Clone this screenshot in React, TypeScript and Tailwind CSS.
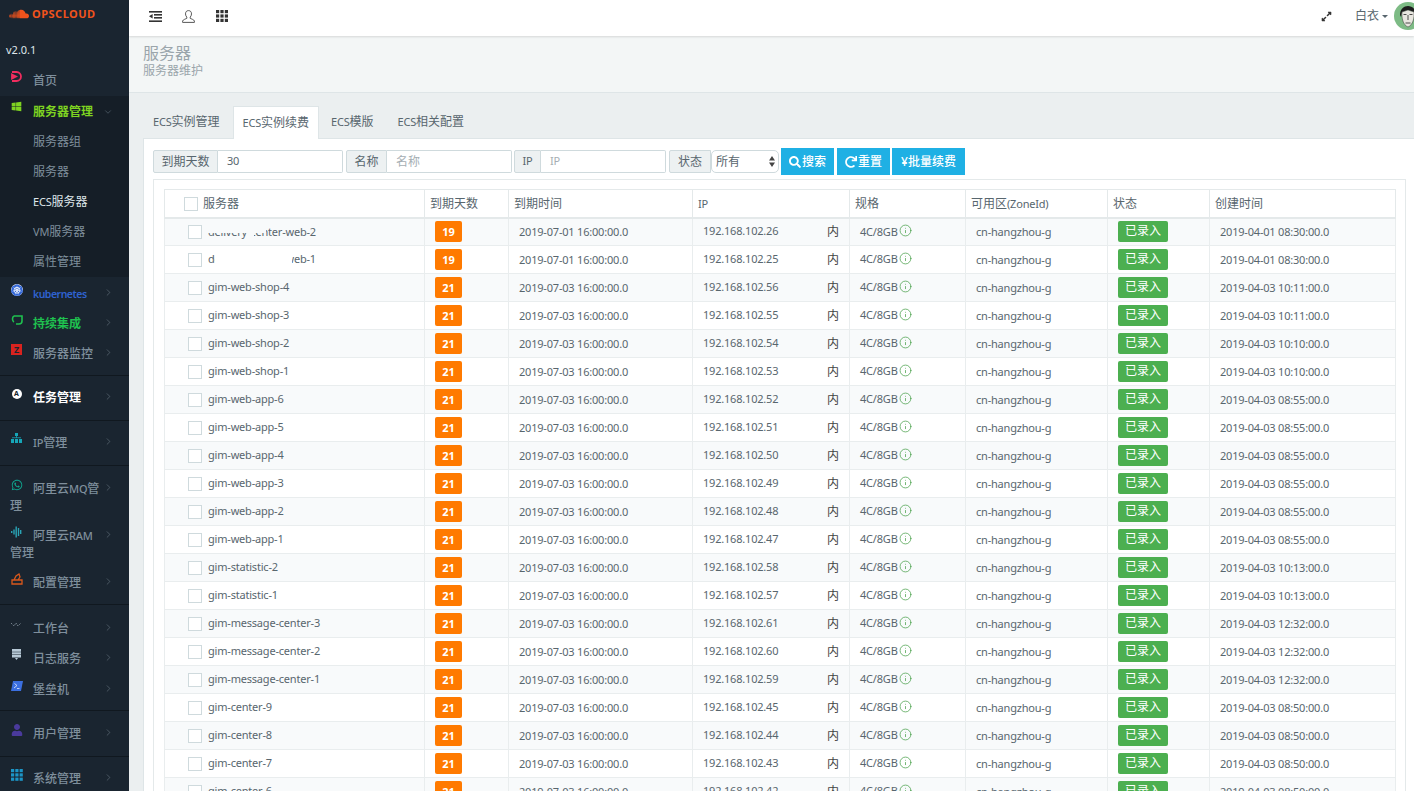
import type { ReactNode } from 'react';
import { ChevronDown, ChevronRight, Info } from 'lucide-react';
import { FaExpandAlt, FaRedo, FaSearch, FaSoundcloud, FaUser, FaWhatsapp, FaWindows } from 'react-icons/fa';
import { SiKubernetes } from 'react-icons/si';

const font = "font-['Noto_Sans','Noto_Sans_CJK_SC',sans-serif]";

// latin runs are set a bit smaller and tighter than the CJK around them
function Mix({ text }: { text: string }) {
  const parts = text.split(/([\x20-\x7e]+)/).filter(Boolean);
  return (
    <>
      {parts.map((p, i) =>
        /^[\x20-\x7e]+$/.test(p) ? (
          <span key={i} className="text-[11px] tracking-[-0.2px]">{p}</span>
        ) : (
          <span key={i}>{p}</span>
        ),
      )}
    </>
  );
}

function OutdentIcon() {
  return (
    <svg width="13" height="11" viewBox="0 0 13 11" fill="#333">
      <rect x="0" y="0" width="13" height="1.6" />
      <rect x="5" y="3" width="8" height="1.6" />
      <rect x="5" y="6" width="8" height="1.6" />
      <rect x="0" y="9.4" width="13" height="1.6" />
      <path d="M0 5.3 3.6 3v4.6z" />
    </svg>
  );
}

function UserLineIcon() {
  return (
    <svg width="13" height="13" viewBox="0 0 13 13" fill="none" stroke="#444" strokeWidth="0.9">
      <path d="M6.5.6c-2 0-3 1.4-3 3.3 0 1.4.6 2.5 1.3 3.2v1.2C4 8.9 1 9.5.6 11c-.1.5 0 1.4 0 1.4h11.800s.1-.9 0-1.400C12 9.500 9 8.900 8.200 8.300V7.100c.7-.7 1.300-1.800 1.300-3.200 0-1.900-1-3.300-3-3.300z" />
    </svg>
  );
}

function GridIcon() {
  return (
    <svg width="12" height="12" viewBox="0 0 12 12" fill="#333">
      {[0, 4.4, 8.8].flatMap((y) =>
        [0, 4.4, 8.8].map((x) => <rect key={`${x}-${y}`} x={x} y={y} width="3.2" height="3.2" />),
      )}
    </svg>
  );
}

function Avatar() {
  return (
    <svg width="28" height="28" viewBox="0 0 28 28" className="shrink-0">
      <circle cx="14" cy="14" r="14" fill="#7dbb85" />
      <path d="M6 13c0-6 4-9 8-9s8 3 8 9l-1 2-1-5-6-2-6 2-1 5z" fill="#1c1c1c" />
      <path d="M8 10l6-2 6 2c.5 6-1 13-6 15-5-2-6.5-9-6-15z" fill="#e8e6df" stroke="#333" strokeWidth="0.5" />
      <path d="M9.5 12.5h3M15.5 12.5h3M14 13v5M11.5 21h5" stroke="#222" strokeWidth="0.8" fill="none" />
    </svg>
  );
}

function NavIcon({ children }: { children: ReactNode }) {
  return <span className="relative -top-[5px] mr-[10px] inline-flex h-[13px] w-[13px] items-center justify-center align-middle">{children}</span>;
}

type NavEntry = {
  label: string;
  icon: ReactNode;
  text?: string;
  pt: string;
  pb: string;
  divider?: boolean;
};

const navTop: NavEntry[] = [
  {
    label: 'kubernetes',
    icon: <span className="rounded-full bg-white"><SiKubernetes size={12} color="#3367d6" /></span>,
    text: 'text-[#2f62cf] text-[10.5px] tracking-[-0.5px] font-semibold',
    pt: 'pt-[8px]',
    pb: 'pb-[6px]',
  },
  {
    label: '持续集成',
    icon: (
      <svg width="12" height="12" viewBox="0 0 12 12" fill="none" stroke="#1fc14f" strokeWidth="1.6">
        <path d="M3 2h8v5c0 2-1 3-3 3H5M3 2C1 3 1 7 3 8" />
      </svg>
    ),
    text: 'text-[#1fc14f] font-semibold',
    pt: 'pt-[6px]',
    pb: 'pb-[6px]',
  },
  {
    label: '服务器监控',
    icon: <span className="flex h-[11px] w-[11px] items-center justify-center bg-[#d9231f] text-[9px] leading-none font-bold text-[#1a2530]">Z</span>,
    pt: 'pt-[7px]',
    pb: 'pb-[13px]',
    divider: true,
  },
  {
    label: '任务管理',
    icon: <span className="flex h-[10px] w-[10px] items-center justify-center rounded-full bg-white text-[7px] leading-none font-bold text-[#1a2530]">A</span>,
    text: 'text-white font-semibold',
    pt: 'pt-[13px]',
    pb: 'pb-[14px]',
    divider: true,
  },
  {
    label: 'IP管理',
    icon: (
      <svg width="11" height="11" viewBox="0 0 11 11" fill="#16a6b8">
        <rect x="4" y="0" width="3" height="3" />
        <rect x="5.1" y="3" width="0.8" height="2" />
        <rect x="1" y="4.4" width="9" height="0.8" />
        <rect x="0" y="6" width="3" height="4" />
        <rect x="4" y="6" width="3" height="4" />
        <rect x="8" y="6" width="3" height="4" />
      </svg>
    ),
    pt: 'pt-[13px]',
    pb: 'pb-[14px]',
    divider: true,
  },
  {
    label: '阿里云MQ管理',
    icon: <FaWhatsapp size={12} color="#10a58e" />,
    pt: 'pt-[14px]',
    pb: 'pb-[7px]',
  },
  {
    label: '阿里云RAM管理',
    icon: (
      <svg width="12" height="12" viewBox="0 0 12 12" fill="#2aa3b5">
        <rect x="0" y="5" width="1.4" height="2" />
        <rect x="2.3" y="3.5" width="1.4" height="5" />
        <rect x="4.5" y="0.5" width="1.4" height="11" />
        <rect x="6.8" y="2" width="1.4" height="8" />
        <rect x="9" y="4" width="1.4" height="4" />
      </svg>
    ),
    pt: 'pt-[6px]',
    pb: 'pb-[6px]',
  },
  {
    label: '配置管理',
    icon: (
      <svg width="12" height="12" viewBox="0 0 12 12" fill="none" stroke="#d9581c" strokeWidth="1.3">
        <path d="M1 7h10v4H1zM3 7l2-4 3-2 1 3-2 3" />
      </svg>
    ),
    pt: 'pt-[7px]',
    pb: 'pb-[13px]',
    divider: true,
  },
  {
    label: '工作台',
    icon: (
      <svg width="11" height="6" viewBox="0 0 11 6" fill="none" stroke="#8a98a3" strokeWidth="0.8" strokeDasharray="1.5 1">
        <path d="M0 1l3 3 2-3 2 3 3-3" />
      </svg>
    ),
    pt: 'pt-[15px]',
    pb: 'pb-[6px]',
  },
  {
    label: '日志服务',
    icon: (
      <svg width="9" height="11" viewBox="0 0 9 11" fill="#b7c9d6">
        <rect x="0" y="0" width="9" height="8.5" />
        <path d="M3 9h3l-1.5 2z" />
        <path d="M0 3h9M0 5.5h9" stroke="#1a2530" strokeWidth="0.5" />
      </svg>
    ),
    pt: 'pt-[7px]',
    pb: 'pb-[7px]',
  },
  {
    label: '堡垒机',
    icon: (
      <svg width="12" height="10" viewBox="0 0 12 10">
        <path d="M2 0h10l-2 10H0z" fill="#3b6fe0" />
        <path d="M3.5 2.5 6 4.5 3 7M6 7.5h2.5" stroke="#fff" strokeWidth="0.7" fill="none" />
      </svg>
    ),
    pt: 'pt-[7px]',
    pb: 'pb-[12px]',
    divider: true,
  },
  {
    label: '用户管理',
    icon: <FaUser size={12} color="#4a3a9c" />,
    pt: 'pt-[14px]',
    pb: 'pb-[14px]',
    divider: true,
  },
  {
    label: '系统管理',
    icon: (
      <svg width="12" height="12" viewBox="0 0 12 12" fill="#1c95c6">
        {[0, 4.3, 8.6].flatMap((y) =>
          [0, 4.3, 8.6].map((x) => <rect key={`${x}-${y}`} x={x} y={y} width="3.2" height="3.2" />),
        )}
      </svg>
    ),
    pt: 'pt-[13px]',
    pb: 'pb-[10px]',
  },
];

const subNav = [
  { label: '服务器组', active: false },
  { label: '服务器', active: false },
  { label: 'ECS服务器', active: true },
  { label: 'VM服务器', active: false },
  { label: '属性管理', active: false },
];

function Sidebar() {
  return (
    <aside className="flex h-full w-[129px] shrink-0 flex-col overflow-hidden bg-[#1a2530] text-[12px] leading-[17px] text-[#7f8f9c]">
      <div className="flex items-center gap-[3px] pt-[2px] pl-[9px] text-[#f0531c]">
        <FaSoundcloud size={20} />
        <span className="text-[11px] leading-[24px] font-bold tracking-[0.5px]">OPSCLOUD</span>
      </div>
      <div className="pt-[14px] pl-[6px] text-[11px] leading-[20px] text-[#dfe6ea]">v2.0.1</div>
      <div className="pt-[12px] pb-[7px] pl-[10px] font-medium">
        <NavIcon>
          <svg width="11" height="11" viewBox="0 0 11 11" fill="none" stroke="#ef2d5e" strokeWidth="1.8">
            <path d="M1 1h4.500a4.500 4.500 0 0 1 0 9H1" />
            <path d="M1 3.500 5 5.500 1 7.500z" fill="#ef2d5e" />
          </svg>
        </NavIcon>
        首页
      </div>
      <div className="bg-[#151e27] pb-[1px]">
        <div className="flex items-center pt-[7px] pb-[6px] pl-[10px]">
          <NavIcon><FaWindows size={11} color="#7ed321" /></NavIcon>
          <span className="font-semibold text-[#7ed321]">服务器管理</span>
          <ChevronDown size={10} strokeWidth={1.2} className="ml-auto mr-[16px] text-[#6f7e8a]" />
        </div>
        {subNav.map((item) => (
          <div key={item.label} className={`py-[6.5px] pl-[33px] ${item.active ? 'text-[#dfe6ea]' : ''}`}>
            <Mix text={item.label} />
          </div>
        ))}
      </div>
      {navTop.map((item) => (
        <div key={item.label} className={`pl-[10px] ${item.pt} ${item.pb} ${item.divider ? 'border-b border-[#10181f]' : ''}`}>
          <ChevronRight size={11} strokeWidth={1.2} className="float-right mt-[2px] mr-[15px] text-[#6f7e8a]" />
          <NavIcon>{item.icon}</NavIcon>
          <span className={item.text ?? 'font-medium'}>
            {item.label === 'kubernetes' ? item.label : <Mix text={item.label} />}
          </span>
        </div>
      ))}
    </aside>
  );
}

function Addon({ children, className }: { children: string; className: string }) {
  return (
    <span className={`flex h-[23px] shrink-0 items-center justify-center rounded-l-[2px] border border-[#cfdadd] bg-[#edf1f2] text-[12px] text-[#58666e] ${className}`}>
      <Mix text={children} />
    </span>
  );
}

function TextField({ value, placeholder, className }: { value?: string; placeholder?: string; className: string }) {
  return (
    <span className={`flex h-[23px] items-center rounded-r-[2px] border border-l-0 border-[#cfdadd] bg-white pl-[9px] text-[12px] ${value ? 'text-[#58666e]' : 'text-[#a5aeb3]'} ${className}`}>
      <Mix text={value ?? placeholder ?? ''} />
    </span>
  );
}

function ActionButton({ children, className }: { children: ReactNode; className: string }) {
  return (
    <button className={`flex h-[27px] items-center justify-center gap-[1px] bg-[#1fb0e4] text-[12px] font-medium text-white ${className}`}>
      {children}
    </button>
  );
}

type Row = { name: string; days: number; expire: string; ip: string; created: string };

const r = (name: string, ip: string, created: string): Row => ({ name, days: 21, expire: '2019-07-03 16:00:00.0', ip, created });

const rows: Row[] = [
  { name: 'delivery-center-web-2', days: 19, expire: '2019-07-01 16:00:00.0', ip: '192.168.102.26', created: '2019-04-01 08:30:00.0' },
  { name: 'delivery-center-web-1', days: 19, expire: '2019-07-01 16:00:00.0', ip: '192.168.102.25', created: '2019-04-01 08:30:00.0' },
  r('gim-web-shop-4', '192.168.102.56', '2019-04-03 10:11:00.0'),
  r('gim-web-shop-3', '192.168.102.55', '2019-04-03 10:11:00.0'),
  r('gim-web-shop-2', '192.168.102.54', '2019-04-03 10:10:00.0'),
  r('gim-web-shop-1', '192.168.102.53', '2019-04-03 10:10:00.0'),
  r('gim-web-app-6', '192.168.102.52', '2019-04-03 08:55:00.0'),
  r('gim-web-app-5', '192.168.102.51', '2019-04-03 08:55:00.0'),
  r('gim-web-app-4', '192.168.102.50', '2019-04-03 08:55:00.0'),
  r('gim-web-app-3', '192.168.102.49', '2019-04-03 08:55:00.0'),
  r('gim-web-app-2', '192.168.102.48', '2019-04-03 08:55:00.0'),
  r('gim-web-app-1', '192.168.102.47', '2019-04-03 08:55:00.0'),
  r('gim-statistic-2', '192.168.102.58', '2019-04-03 10:13:00.0'),
  r('gim-statistic-1', '192.168.102.57', '2019-04-03 10:13:00.0'),
  r('gim-message-center-3', '192.168.102.61', '2019-04-03 12:32:00.0'),
  r('gim-message-center-2', '192.168.102.60', '2019-04-03 12:32:00.0'),
  r('gim-message-center-1', '192.168.102.59', '2019-04-03 12:32:00.0'),
  r('gim-center-9', '192.168.102.45', '2019-04-03 08:50:00.0'),
  r('gim-center-8', '192.168.102.44', '2019-04-03 08:50:00.0'),
  r('gim-center-7', '192.168.102.43', '2019-04-03 08:50:00.0'),
  r('gim-center-6', '192.168.102.42', '2019-04-03 08:50:00.0'),
];

const headers = ['到期天数', '到期时间', 'IP', '规格', '可用区(ZoneId)', '状态', '创建时间'];

function Checkbox() {
  return <span className="inline-block h-[14px] w-[14px] shrink-0 border border-[#cfdadd] bg-white" />;
}

function ServerTable() {
  return (
    <table className="w-[1231px] table-fixed border-collapse text-[12px] text-[#58666e]">
      <colgroup>
        <col className="w-[260px]" />
        <col className="w-[84px]" />
        <col className="w-[184px]" />
        <col className="w-[157px]" />
        <col className="w-[116px]" />
        <col className="w-[142px]" />
        <col className="w-[102px]" />
        <col className="w-[186px]" />
      </colgroup>
      <thead>
        <tr className="h-[28px] border border-b-2 border-[#e4e9ea] text-left">
          <th className="border-r border-[#e4e9ea] pt-[2px] pl-[19px] font-normal">
            <span className="flex items-center gap-[5px]"><Checkbox />服务器</span>
          </th>
          {headers.map((h) => (
            <th key={h} className="border-r border-[#e4e9ea] pt-[2px] pl-[5px] font-normal"><Mix text={h} /></th>
          ))}
        </tr>
      </thead>
      <tbody>
        {rows.map((row, i) => (
          <tr key={row.name} className={`h-[28px] border border-[#e9edee] ${i % 2 === 0 ? 'bg-[#f8fafb]' : 'bg-white'}`}>
            <td className="relative border-r border-[#e9edee] pl-[23px]">
              <span className="flex items-center gap-[6px]">
                <Checkbox />
                <Mix text={row.name} />
              </span>
              {i === 0 && (
                <>
                  <span className="absolute top-[6px] left-[43px] h-[8px] w-[58px] bg-[#f8fafb]" />
                  <span className="absolute top-[6px] left-[82px] h-[16px] w-[7px] bg-[#f8fafb]" />
                </>
              )}
              {i === 1 && <span className="absolute top-[6px] left-[50px] h-[17px] w-[77px] bg-white" />}
            </td>
            <td className="border-r border-[#e9edee] pl-[10px]">
              <span className="block h-[21px] w-[27px] rounded-[2px] bg-[#ff7a00] text-center text-[11px] leading-[21px] font-bold text-white">{row.days}</span>
            </td>
            <td className="border-r border-[#e9edee] pl-[10px]"><Mix text={row.expire} /></td>
            <td className="border-r border-[#e9edee] pr-[10px] pl-[10px]">
              <span className="flex justify-between"><Mix text={row.ip} /><span className="text-[#444]">内</span></span>
            </td>
            <td className="border-r border-[#e9edee] pl-[10px]">
              <span className="flex items-center gap-[1px]"><Mix text="4C/8GB" /><Info size={13} strokeWidth={1.3} className="relative -top-[1px] text-[#3d9a3f]" /></span>
            </td>
            <td className="border-r border-[#e9edee] pl-[10px]"><Mix text="cn-hangzhou-g" /></td>
            <td className="border-r border-[#e9edee] pl-[10px]">
              <span className="block h-[21px] w-[50px] rounded-[2px] bg-[#4caf50] text-center text-[12px] leading-[20px] text-white">已录入</span>
            </td>
            <td className="border-r border-[#e9edee] pl-[10px]"><Mix text={row.created} /></td>
          </tr>
        ))}
      </tbody>
    </table>
  );
}

export default function App() {
  return (
    <div className={`flex h-[791px] w-[1414px] overflow-hidden bg-[#ebeff0] ${font}`}>
      <Sidebar />
      <main className="flex min-w-0 flex-1 flex-col">
        <header className="relative flex h-[36px] shrink-0 items-center bg-white pr-0 pb-[4px] pl-[20px] shadow-[0_1px_2px_rgba(0,0,0,0.12)]">
          <OutdentIcon />
          <span className="ml-[20px] flex"><UserLineIcon /></span>
          <span className="ml-[21px] flex"><GridIcon /></span>
          <span className="ml-auto flex items-center text-[12px] text-[#58666e]">
            <FaExpandAlt size={11} color="#333" />
            <span className="ml-[23px]">白衣</span>
            <span className="ml-[3px] h-0 w-0 border-x-[3px] border-t-[3px] border-x-transparent border-t-[#58666e]" />
            <span className="-mr-[8px] ml-[6px] flex"><Avatar /></span>
          </span>
        </header>
        <section className="h-[57px] shrink-0 border-b border-[#dee5e7] bg-[#f3f6f6] pt-[6px] pl-[14px] text-[#9aa5ab]">
          <h1 className="text-[16px] leading-[22px] font-normal">服务器</h1>
          <p className="text-[12px] leading-[13px]">服务器维护</p>
        </section>
        <div className="flex min-h-0 flex-1 flex-col pt-[13px] pl-[14px]">
          <nav className="flex h-[32px] shrink-0 text-[12px] text-[#58666e]">
            <span className="mr-[3px] flex items-center px-[10px]"><Mix text="ECS实例管理" /></span>
            <span className="relative z-10 mr-[2px] flex h-[33px] items-center border border-b-0 border-[#dee5e7] bg-white px-[9px]"><Mix text="ECS实例续费" /></span>
            <span className="mr-[4px] flex items-center px-[10px]"><Mix text="ECS模版" /></span>
            <span className="flex items-center px-[10px]"><Mix text="ECS相关配置" /></span>
          </nav>
          <div className="min-h-0 flex-1 border-t border-l border-[#dee5e7] bg-white pt-[9px] pl-[9px]">
            <div className="flex items-center">
              <Addon className="w-[65px]">到期天数</Addon>
              <TextField value="30" className="w-[125px]" />
              <Addon className="ml-[3px] w-[41px]">名称</Addon>
              <TextField placeholder="名称" className="w-[125px]" />
              <Addon className="ml-[2px] w-[27px]">IP</Addon>
              <TextField placeholder="IP" className="w-[125px]" />
              <Addon className="ml-[3px] w-[42px]">状态</Addon>
              <span className="flex h-[23px] w-[68px] items-center justify-between rounded-[5px] border border-[#cfdadd] bg-white pr-[3px] pl-[4px] text-[12px] text-[#58666e]">
                所有
                <svg width="6" height="11" viewBox="0 0 6 11" fill="#444"><path d="M3 0l3 4.5H0zM3 11 0 6.5h6z" /></svg>
              </span>
              <ActionButton className="ml-[2px] w-[53px]"><FaSearch size={12} />搜索</ActionButton>
              <ActionButton className="ml-[3px] w-[53px]"><FaRedo size={12} />重置</ActionButton>
              <ActionButton className="ml-[2px] w-[73px]">¥批量续费</ActionButton>
            </div>
            <div className="mt-[4px] h-full w-[1253px] border border-[#e4e9ea] pt-[9px] pl-[10px]">
              <ServerTable />
            </div>
          </div>
        </div>
      </main>
    </div>
  );
}
